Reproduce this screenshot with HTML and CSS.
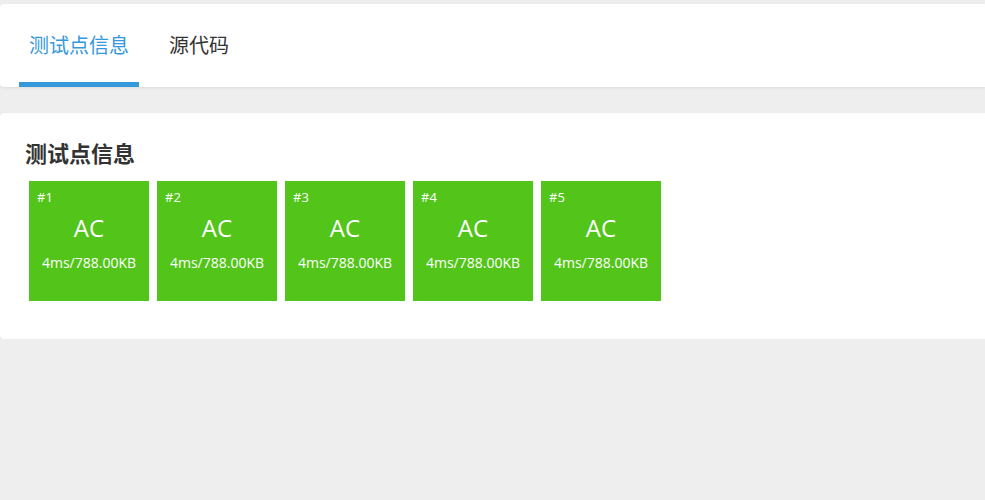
FILE: index.html
```html
<!DOCTYPE html>
<html>
<head>
<meta charset="utf-8">
<link rel="stylesheet" href="styles.css">
</head>
<body>
<div class="page">
  <div class="card tabs-card">
    <div class="tabs">
      <div class="tab active">测试点信息</div>
      <div class="tab">源代码</div>
    </div>
  </div>
  <div class="card info-card">
    <h2 class="title">测试点信息</h2>
    <div class="cases">
      <div class="case"><div class="num">#1</div><div class="res">AC</div><div class="stat">4ms/788.00KB</div></div>
      <div class="case"><div class="num">#2</div><div class="res">AC</div><div class="stat">4ms/788.00KB</div></div>
      <div class="case"><div class="num">#3</div><div class="res">AC</div><div class="stat">4ms/788.00KB</div></div>
      <div class="case"><div class="num">#4</div><div class="res">AC</div><div class="stat">4ms/788.00KB</div></div>
      <div class="case"><div class="num">#5</div><div class="res">AC</div><div class="stat">4ms/788.00KB</div></div>
    </div>
  </div>
</div>
</body>
</html>
```

FILE: styles.css
```css
html, body {
  margin: 0;
  padding: 0;
  background: #eeeeee;
  font-family: "Open Sans", "Noto Sans CJK SC", sans-serif;
  overflow: hidden;
}
.page {
  padding-top: 4px;
  display: flex;
  flex-direction: column;
  gap: 26px;
}
.card {
  background: #fff;
  border-radius: 4px 0 0 4px;
  box-shadow: 0 1px 3px rgba(0, 0, 0, 0.08);
}
.tabs-card {
  height: 83px;
}
.tabs {
  display: flex;
  gap: 20px;
  padding-left: 19px;
}
.tab {
  height: 83px;
  line-height: 83px;
  padding: 0 10px;
  font-size: 20px;
  color: #333;
  box-sizing: border-box;
}
.tab.active {
  color: #3498db;
  box-shadow: inset 0 -5px 0 #3498db;
}
.info-card {
  padding: 25px 0 34px 25px;
}
.title {
  margin: 0 0 9px 0;
  font-size: 22px;
  line-height: 30px;
  font-weight: 700;
  color: #333;
}
.cases {
  display: flex;
  gap: 8px;
  padding: 4px;
}
.case {
  width: 120px;
  height: 120px;
  background: #52c41a;
  color: #fff;
  box-sizing: border-box;
  padding: 8px;
  display: flex;
  flex-direction: column;
}
.num {
  font-size: 13px;
  line-height: 16px;
}
.res {
  margin-top: 7px;
  font-size: 24px;
  line-height: 32px;
  text-align: center;
}
.stat {
  margin-top: 10px;
  font-size: 14px;
  line-height: 18px;
  text-align: center;
  white-space: nowrap;
}
```
